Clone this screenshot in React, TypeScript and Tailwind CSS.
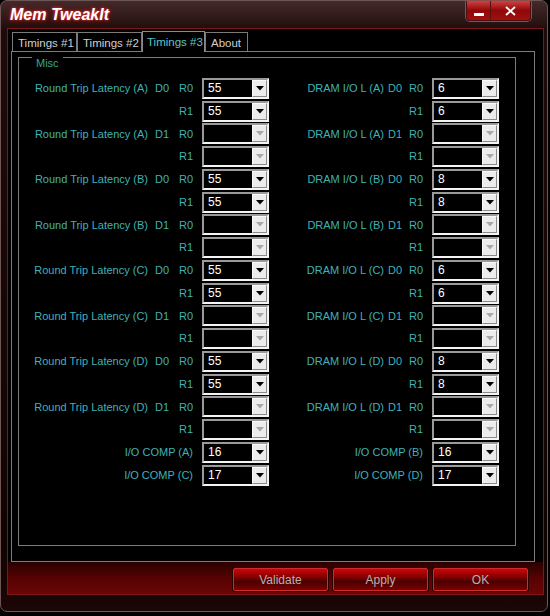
import React from "react";

type Row = { label?: string; d?: string; r?: string; v: string | null };

const FONT = { fontFamily: '"Liberation Sans", Arial, sans-serif' };

function makeRows(prefix: string, vals: string[], comps: [string, string][]): Row[] {
  const rows: Row[] = [];
  ["A", "B", "C", "D"].forEach((ch, i) => {
    rows.push({ label: `${prefix} (${ch})`, d: "D0", r: "R0", v: vals[i] });
    rows.push({ r: "R1", v: vals[i] });
    rows.push({ label: `${prefix} (${ch})`, d: "D1", r: "R0", v: null });
    rows.push({ r: "R1", v: null });
  });
  comps.forEach(([l, v]) => rows.push({ label: l, v }));
  return rows;
}

const left = makeRows("Round Trip Latency", ["55", "55", "55", "55"], [
  ["I/O COMP (A)", "16"],
  ["I/O COMP (C)", "17"],
]);
const right = makeRows("DRAM I/O L", ["6", "8", "6", "8"], [
  ["I/O COMP (B)", "16"],
  ["I/O COMP (D)", "17"],
]);

function Combo({ value }: { value: string | null }) {
  const off = value === null;
  return (
    <div className="ml-[9px] flex h-[21px] w-[67px] shrink-0 border-2 border-t-[#9a9a9a] border-l-[#9a9a9a] border-b-[#f4f4f4] border-r-[#f4f4f4] bg-black">
      <span className="flex-1 pl-[4px] text-[12px] leading-[17px] text-white">{value}</span>
      <span className="flex w-[15px] items-center justify-center border border-t-[#fafafa] border-l-[#fafafa] border-b-[#8a8a8a] border-r-[#8a8a8a] bg-[#ececec]">
        <svg width="8" height="5" viewBox="0 0 8 5">
          <polygon points="0,0 8,0 4,4.5" fill={off ? "#a8a8a8" : "#000"} />
        </svg>
      </span>
    </div>
  );
}

function Column({ rows, width, dw, gap }: { rows: Row[]; width: string; dw: string; gap: string }) {
  return (
    <div className={`flex flex-col ${width}`}>
      {rows.map((row, i) => (
        <div key={i} className="flex h-[22.75px] items-center justify-end text-[11px] text-[#3fb2b6]">
          {row.label && <span className={row.d ? gap : ""}>{row.label}</span>}
          {row.d && <span className={dw}>{row.d}</span>}
          {row.r && <span className="w-[14px]">{row.r}</span>}
          <Combo value={row.v} />
        </div>
      ))}
    </div>
  );
}

function Button({ children }: { children: React.ReactNode }) {
  return (
    <div className="flex h-[23px] w-[95px] items-center justify-center rounded-[2px] border border-[#d02a2a] bg-[linear-gradient(to_bottom,#c80808_0%,#8a0000_35%,#4a0000_60%,#7a0000_100%)] text-[12px] text-[#b8b0b0] shadow-[0_0_0_1px_#2a0000]">
      {children}
    </div>
  );
}

const tabs = [
  { t: "Timings #1", w: "w-[65px]" },
  { t: "Timings #2", w: "w-[65px]" },
  { t: "Timings #3", w: "w-[63px]" },
  { t: "About", w: "w-[43px]" },
];

export default function App() {
  return (
    <div className="h-[616px] w-[550px] bg-black" style={FONT}>
      <div className="relative h-[612px] w-[548px] rounded-[7px] border border-[#6e5656] bg-[linear-gradient(to_bottom,#442a2a_0%,#1e0a0a_5%,#120303_90%,#1c0606_100%)]">
        {/* title bar */}
        <div className="flex h-[27px] items-center pl-[9px]">
          <span className="text-[16px] font-bold italic text-white [text-shadow:0_0_3px_#ff4040,0_0_6px_#b00000]">
            Mem TweakIt
          </span>
        </div>

        {/* caption buttons */}
        <div className="absolute right-[16px] top-0 flex h-[20px] overflow-hidden rounded-b-[4px] border border-t-0 border-[#4a1010] shadow-[0_0_0_1px_#8a5050]">
          <div className="flex w-[24px] items-end justify-center border-r border-[#5a1010] bg-[linear-gradient(to_bottom,#d04040,#900808_50%,#a01010)] pb-[4px]">
            <span className="h-[3px] w-[10px] bg-white" />
          </div>
          <div className="flex w-[39px] items-center justify-center bg-[linear-gradient(to_bottom,#d04040,#900808_50%,#a01010)]">
            <svg width="11" height="10" viewBox="0 0 11 10">
              <path d="M1 1 L10 9 M10 1 L1 9" stroke="#fff" strokeWidth="1.8" />
            </svg>
          </div>
        </div>

        {/* client */}
        <div className="ml-[6px] mr-[3px] border border-[#7e1818]">
          <div className="flex flex-col bg-black pl-[3px] pt-[2px]">
            <div className="flex h-[20px] items-end pl-[1px] text-[11.5px]">
              {tabs.map(({ t, w }, i) =>
                i === 2 ? (
                  <div
                    key={t}
                    className={`relative z-10 -mb-px flex h-[21px] ${w} items-start border border-b-0 border-[#8a8a8a] bg-black pl-[4px] pt-[2px] text-[#5ec4cc]`}
                  >
                    {t}
                  </div>
                ) : (
                  <div
                    key={t}
                    className={`flex h-[19px] ${w} items-start border border-b-0 border-[#7a7a7a] pl-[5px] pt-[2px] text-[#cfcfcf]`}
                  >
                    {t}
                  </div>
                )
              )}
            </div>
            <div className="h-[511px] w-[524px] border border-[#7c7c7c] pl-[6px] pt-[5px]">
              <div className="relative h-[489px] w-[498px] border border-[#7c7c7c] pt-[19px]">
                <span className="absolute left-[13px] top-[-1px] bg-black px-[4px] text-[11px] leading-[12px] text-[#36a88c]">
                  Misc
                </span>
                <div className="flex">
                  <Column rows={left} width="w-[250px]" dw="w-[24px]" gap="mr-[7px]" />
                  <Column rows={right} width="w-[230px]" dw="w-[21px]" gap="mr-[4px]" />
                </div>
              </div>
            </div>
          </div>
          <div className="flex h-[32px] justify-end gap-[5px] bg-[linear-gradient(to_bottom,#2a0000,#5a0202_55%,#6a0606)] pr-[15px] pt-[6px]">
            <Button>Validate</Button>
            <Button>Apply</Button>
            <Button>OK</Button>
          </div>
        </div>
      </div>
    </div>
  );
}
